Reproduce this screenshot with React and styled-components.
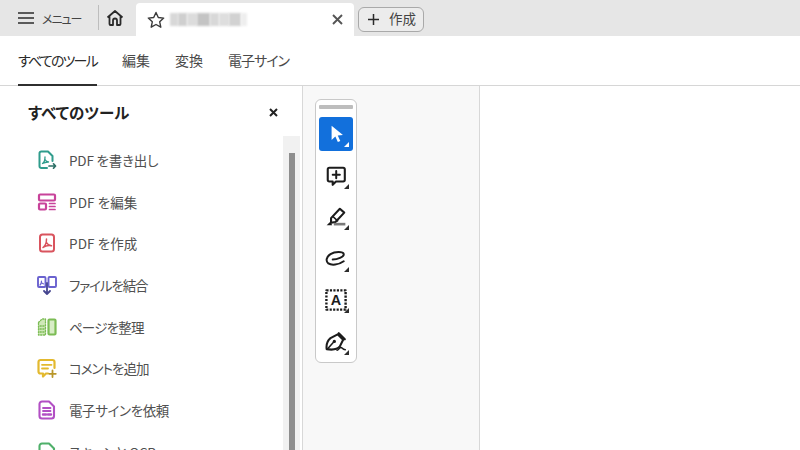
import React from 'react';
import styled, { createGlobalStyle } from 'styled-components';

const Global = createGlobalStyle`
  html, body { margin: 0; padding: 0; width: 800px; height: 450px; overflow: hidden; background: #fff; }
  * { box-sizing: border-box; }
  body { font-family: "Noto Sans CJK JP", "Noto Sans", sans-serif; color: #2c2c2c; font-feature-settings: "palt"; }
`;
const Page = styled.div`width: 800px; height: 450px; display: flex; flex-direction: column; overflow: hidden;`;
const TabBar = styled.div`height: 36px; flex: none; background: #e6e6e6; display: flex; align-items: stretch; padding-top: 3px;`;
const MenuButton = styled.div`width: 98px; display: flex; align-items: center; padding: 0 0 0 18px; gap: 8px; font-size: 12px; letter-spacing: -1px; color: #444; margin-top: -3px;`;
const Divider = styled.div`width: 1px; height: 25px; background: #bdbdbd; align-self: center; margin-top: -5px;`;
const HomeButton = styled.div`width: 37px; display: flex; align-items: center; justify-content: center; padding-right: 6px; margin-top: -3px;`;
const Tab = styled.div`width: 218px; background: #fff; border-radius: 4px 4px 0 0; display: flex; align-items: center; padding: 0 11px;`;
const Blur = styled.div`display: flex; height: 13px; margin-left: 5px; flex: 1; align-items: stretch;`;
const BlurCell = styled.div`width: ${p => p.$w}px; background: ${p => p.$c}; filter: blur(1px);`;
const CreateButton = styled.div`width: 66px; height: 25px; margin: 4px 0 0 4px; border: 1px solid #a9a9a9; border-radius: 6px; background: #ececec; display: flex; align-items: center; padding-left: 9px; gap: 10px; font-size: 13.5px; color: #444;`;
const CreateLabel = styled.span`margin-top: -3px;`;
const NavRow = styled.div`height: 50px; flex: none; display: flex; align-items: stretch; padding-left: 18px; gap: 25px; border-bottom: 1px solid #d6d6d6;`;
const NavItem = styled.div`font-size: 14px; letter-spacing: ${p => p.$ls || 0}px; color: ${p => p.$active ? '#2a2a2a' : '#4a4a4a'}; display: flex; align-items: center; height: 50px; border-bottom: ${p => p.$active ? '2px solid #2f2f2f' : '2px solid transparent'};`;
const Main = styled.div`flex: 1; display: flex; min-height: 0;`;
const Sidebar = styled.aside`width: 303px; flex: none; border-right: 1px solid #d8d8d8; display: flex; flex-direction: column; min-height: 0;`;
const SideHead = styled.div`height: 50px; flex: none; display: flex; align-items: center; justify-content: space-between; padding: 2px 24px 0 28px; font-size: 15.5px; font-weight: 700; color: #222;`;
const SideBody = styled.div`flex: 1; display: flex; min-height: 0;`;
const ToolList = styled.div`flex: 1; padding: 3px 0 0 37px; overflow: hidden;`;
const ToolRow = styled.div`height: 41.7px; display: flex; align-items: center; gap: 12px; font-size: 13.5px; color: #505050; white-space: nowrap;`;
const ToolLabel = styled.span`letter-spacing: ${p => p.$ls}px;`;
const IconSlot = styled.div`width: 20px; height: 20px; flex: none;`;
const ScrollTrack = styled.div`width: 17px; margin-right: 2px; background: #f1f1f1; padding: 17px 5px 0 6px;`;
const ScrollThumb = styled.div`height: 100%; background: #8e8e8e;`;
const Canvas = styled.div`width: 177px; flex: none; background: #f8f8f8; border-right: 1px solid #d8d8d8; padding: 13px 0 0 12px;`;
const ToolStrip = styled.div`width: 42px; height: 264px; background: #fff; border: 1px solid #c9c9c9; border-radius: 6px; padding: 5px 3px 0 3px; display: flex; flex-direction: column; align-items: center;`;
const Grip = styled.div`width: 34px; height: 4px; flex: none; background: #bdbdbd; border-radius: 1px; margin-bottom: 8px;`;
const StripButton = styled.div`position: relative; width: 34px; height: 34px; flex: none; margin-bottom: 7.6px; border-radius: 3px; background: ${p => p.$active ? '#1270dc' : 'transparent'}; display: flex; align-items: center; justify-content: center;`;
const Corner = styled.span`position: absolute; right: 4px; bottom: 4px; width: 0; height: 0; border-style: solid; border-width: 0 0 5px 5px; border-color: transparent transparent ${p => p.$c || '#2c2c2c'} transparent;`;
const Rest = styled.div`flex: 1; background: #fff;`;

const S = { fill: 'none', strokeLinecap: 'round', strokeLinejoin: 'round' };
const Svg = ({ size = 20, children }) => <svg width={size} height={size} viewBox="0 0 20 20" {...S}>{children}</svg>;
const Acrobat = ({ c, w = 1.3 }) => <path d="M6 14.500c2-1.500 3.500-5 3.500-8.500M9.500 9.500c1 1.800 2.500 3 5 3.300M6 14.500c1.500-1 5-2.500 8.500-1.700" stroke={c} strokeWidth={w} />;

const icons = {
  exportPdf: <Svg><path d="M10 18H4.500A1.800 1.800 0 0 1 2.500 16V3.500A1.800 1.800 0 0 1 4.500 1.500H11l4.500 4.500V11" stroke="#2f9c8c" strokeWidth="2" /><path d="M5.500 13.500c1.500-1 2.500-3.500 2.500-6.500M8 9.500c.7 1.200 1.700 2.200 3.500 2.500M5.500 13.500c1.500-.8 3-1.300 5.500-1.500" stroke="#2f9c8c" strokeWidth="1.300" /><path d="M12 16h6.500M16.500 13.800l2 2.200-2 2.200" stroke="#2d6f66" strokeWidth="1.700" /></Svg>,
  editPdf: <Svg><rect x="2" y="2.500" width="16" height="6" rx="1" stroke="#c8439a" strokeWidth="2.200" /><rect x="2" y="11.500" width="7" height="6" rx="1" stroke="#c8439a" strokeWidth="2.200" /><path d="M12.500 11.500H18M12.500 14.500H18M12.500 17.500H18" stroke="#c8439a" strokeWidth="1.700" /></Svg>,
  createPdf: <Svg><rect x="3" y="1.500" width="14" height="17" rx="2.500" stroke="#d9545e" strokeWidth="2" /><Acrobat c="#d9545e" w={1.500} /></Svg>,
  combine: <Svg><rect x="1" y="2" width="7.500" height="10" rx="1" stroke="#6a62cf" strokeWidth="1.900" /><rect x="11.500" y="2" width="7.500" height="10" rx="1" stroke="#6a62cf" strokeWidth="1.900" /><path d="M3 10c1-.8 1.500-2 1.500-4M4.500 7.500c.4.700 1 1.200 2 1.300" stroke="#6a62cf" strokeWidth="1.200" /><path d="M10 8v11M7 16l3 3 3-3" stroke="#45458f" strokeWidth="1.800" /></Svg>,
  organize: <Svg><path d="M1.500 5.500L5 2h3.500v16h-7z" fill="#cfe8b8" /><path d="M1.500 5.500L5 2h3.500v16h-7zM3 9h4M3 12h4M3 15h4" stroke="#7cbc55" strokeWidth="1.300" strokeDasharray="1.300 1.500" /><rect x="11.500" y="2.500" width="7" height="15" rx="1" fill="#d8edc6" stroke="#7cbc55" strokeWidth="2.200" /></Svg>,
  comment: <Svg><path d="M11 15.500H9l-3 3v-3H3.500a2 2 0 0 1-2-2V4a2 2 0 0 1 2-2h12a2 2 0 0 1 2 2v6" stroke="#e3b92f" strokeWidth="2.200" /><path d="M5 6.800h9.500M5 10.500h6" stroke="#e3b92f" strokeWidth="1.800" /><path d="M15.500 12.500v6.500M12.300 15.800h6.500" stroke="#b8962a" strokeWidth="1.800" /></Svg>,
  sign: <Svg><path d="M5 1.500h7l5 5V16a2.500 2.500 0 0 1-2.500 2.500h-9.500A2.500 2.500 0 0 1 2.500 16V4A2.500 2.500 0 0 1 5 1.500z" stroke="#b24fc4" strokeWidth="2.100" /><path d="M6 8h7.500M6 11h7.500" stroke="#b24fc4" strokeWidth="1.800" /><path d="M6 14.500h3M11 14.500h3" stroke="#b24fc4" strokeWidth="2.400" /></Svg>,
  scan: <Svg><path d="M5 1.500h7l5 5V16a2.500 2.500 0 0 1-2.500 2.500h-9.500A2.500 2.500 0 0 1 2.500 16V4A2.500 2.500 0 0 1 5 1.500z" stroke="#4fb06a" strokeWidth="2.100" /></Svg>,
};

const tools = [
  ['exportPdf', 'PDF を書き出し', -0.2],
  ['editPdf', 'PDF を編集', 0.1],
  ['createPdf', 'PDF を作成', 0.1],
  ['combine', 'ファイルを結合', -1.1],
  ['organize', 'ページを整理', -0.8],
  ['comment', 'コメントを追加', -1],
  ['sign', '電子サインを依頼', -0.4],
  ['scan', 'スキャンと OCR', -0.4],
];

const strip = [
  { active: true, icon: <Svg size={22}><path d="M6 2.500v13l3.400-3.200 2.300 5 2.200-1-2.300-4.900 4.700-.4z" fill="#fff" /></Svg> },
  { icon: <Svg size={22}><path d="M4 2.500h12.500A1.500 1.500 0 0 1 18 4v9.500a1.500 1.500 0 0 1-1.500 1.500H10l-3 3v-3H4a1.500 1.500 0 0 1-1.500-1.500V4A1.500 1.500 0 0 1 4 2.500z" stroke="#1c1c1c" strokeWidth="1.900" /><path d="M10.200 5.500v6.500M7 8.800h6.500" stroke="#1c1c1c" strokeWidth="1.800" /></Svg> },
  { icon: <Svg size={22}><path d="M5.500 11L13.500 2.500l4 3.500-8 8.500-4 .8z" stroke="#1c1c1c" strokeWidth="1.900" /><path d="M7 9.500l4.500 4" stroke="#1c1c1c" strokeWidth="1.400" /><path d="M5 14L1.500 17.500h5z" fill="#1c1c1c" /><path d="M8 16.500h10.500" stroke="#7a7a7a" strokeWidth="2.400" strokeLinecap="butt" /></Svg> },
  { icon: <Svg size={22}><path d="M7 10.500C11 10.500 17.500 8 17 5.500 16.500 3 9 3 5 5.500 1 8 .500 12 3 14c3 2 9 1.500 14-2" stroke="#1c1c1c" strokeWidth="1.800" /></Svg> },
  { icon: <Svg size={24}><rect x="2" y="2" width="16" height="16" stroke="#1c1c1c" strokeWidth="2" strokeDasharray="1.800 1.100" strokeLinecap="butt" /><text x="10" y="14.500" fontSize="12" fontWeight="700" fill="#1c1c1c" stroke="none" textAnchor="middle" fontFamily="Liberation Sans">A</text></Svg> },
  { icon: <Svg size={22}><path d="M1.500 16.500c-.5-4.500 1-8 3.500-10L11.500 3l5 5-3 6c-2 2.500-6 3.500-12 2.500z" stroke="#1c1c1c" strokeWidth="1.900" /><path d="M12.500 2l5.500 5.500" stroke="#1c1c1c" strokeWidth="2" /><path d="M2 16.500l5.500-6" stroke="#1c1c1c" strokeWidth="1.400" /><circle cx="8.500" cy="9.500" r="1.500" fill="#1c1c1c" /><path d="M11 17.500c2-.5 2-2.500 3.500-2.500s1 1.800 4 2" stroke="#1c1c1c" strokeWidth="1.300" /></Svg> },
];

const blur = [[8, '#d8d8d8'], [9, '#cfcfcf'], [10, '#dcdcdc'], [13, '#c4c4c4'], [9, '#d8d8d8'], [10, '#dedede'], [12, '#d2d2d2'], [6, '#eeeeee']];

export default function App() {
  return (
    <Page>
      <Global />
      <TabBar>
        <MenuButton>
          <svg width="16" height="14" viewBox="0 0 16 14" fill="none" stroke="#2c2c2c" strokeWidth="1.600"><path d="M0 2h16M0 7h16M0 12h16" /></svg>
          <span>メニュー</span>
        </MenuButton>
        <Divider />
        <HomeButton>
          <svg width="18" height="18" viewBox="0 0 18 18" fill="none" stroke="#2a2a2a" strokeWidth="1.800" strokeLinejoin="round"><path d="M1.500 8.500L9 2l7.500 6.500M3.500 7.500V15a1 1 0 0 0 1 1H7v-4.500a2 2 0 0 1 4 0V16h2.500a1 1 0 0 0 1-1V7.500" /></svg>
        </HomeButton>
        <Tab>
          <svg width="18" height="18" viewBox="0 0 18 18" fill="none" stroke="#3a3a3a" strokeWidth="1.400" strokeLinejoin="round"><path d="M9 1.500l2.300 5 5.400.6-4 3.700 1.100 5.400L9 13.500 4.200 16.200l1.100-5.400-4-3.700 5.400-.6z" /></svg>
          <Blur>{blur.map(([w, c], i) => <BlurCell key={i} $w={w} $c={c} />)}</Blur>
          <svg width="11" height="11" viewBox="0 0 11 11" fill="none" stroke="#555" strokeWidth="1.900"><path d="M1 1l9 9M10 1l-9 9" /></svg>
        </Tab>
        <CreateButton>
          <svg width="11" height="11" viewBox="0 0 11 11" fill="none" stroke="#2a2a2a" strokeWidth="1.500"><path d="M5.500 0v11M0 5.500h11" /></svg>
          <CreateLabel>作成</CreateLabel>
        </CreateButton>
      </TabBar>
      <NavRow>
        <NavItem $active $ls={-1.8}>すべてのツール</NavItem>
        <NavItem>編集</NavItem>
        <NavItem>変換</NavItem>
        <NavItem $ls={-1}>電子サイン</NavItem>
      </NavRow>
      <Main>
        <Sidebar>
          <SideHead>
            <span>すべてのツール</span>
            <svg width="9" height="9" viewBox="0 0 9 9" fill="none" stroke="#222" strokeWidth="2"><path d="M1 1l7 7M8 1l-7 7" /></svg>
          </SideHead>
          <SideBody>
            <ToolList>
              {tools.map(([k, label, ls]) => (
                <ToolRow key={k}>
                  <IconSlot>{icons[k]}</IconSlot>
                  <ToolLabel $ls={ls}>{label}</ToolLabel>
                </ToolRow>
              ))}
            </ToolList>
            <ScrollTrack><ScrollThumb /></ScrollTrack>
          </SideBody>
        </Sidebar>
        <Canvas>
          <ToolStrip>
            <Grip />
            {strip.map((s, i) => (
              <StripButton key={i} $active={s.active}>
                {s.icon}
                <Corner $c={s.active ? '#fff' : undefined} />
              </StripButton>
            ))}
          </ToolStrip>
        </Canvas>
        <Rest />
      </Main>
    </Page>
  );
}
